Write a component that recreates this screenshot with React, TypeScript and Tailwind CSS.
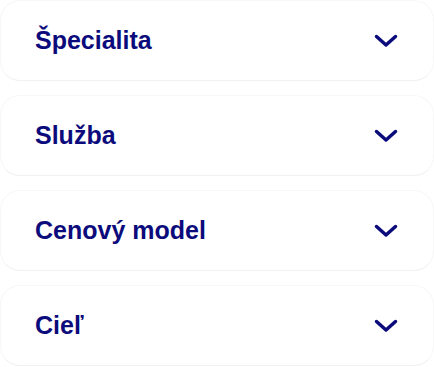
const items = ["Špecialita", "Služba", "Cenový model", "Cieľ"];

function Chevron() {
  return (
    <svg
      width="24"
      height="14"
      viewBox="0 0 24 14"
      fill="none"
      stroke="currentColor"
      strokeWidth="3.5"
      strokeLinecap="round"
      strokeLinejoin="round"
    >
      <polyline points="2.5 2.5 12 11 21.5 2.5" />
    </svg>
  );
}

export default function App() {
  return (
    <div className="w-[434px] h-[367px] bg-white overflow-hidden flex flex-col gap-[14px] font-['Liberation_Sans',Arial,sans-serif]">
      {items.map((label) => (
        <button
          key={label}
          className="h-[81px] shrink-0 w-full flex items-center justify-between pl-[34px] pr-[35px] rounded-[20px] border border-[#f7f7f7] border-b-[#f1f1f1] bg-white text-[#0c0b7c]"
        >
          <span className="text-[25px] font-bold leading-none">{label}</span>
          <Chevron />
        </button>
      ))}
    </div>
  );
}
